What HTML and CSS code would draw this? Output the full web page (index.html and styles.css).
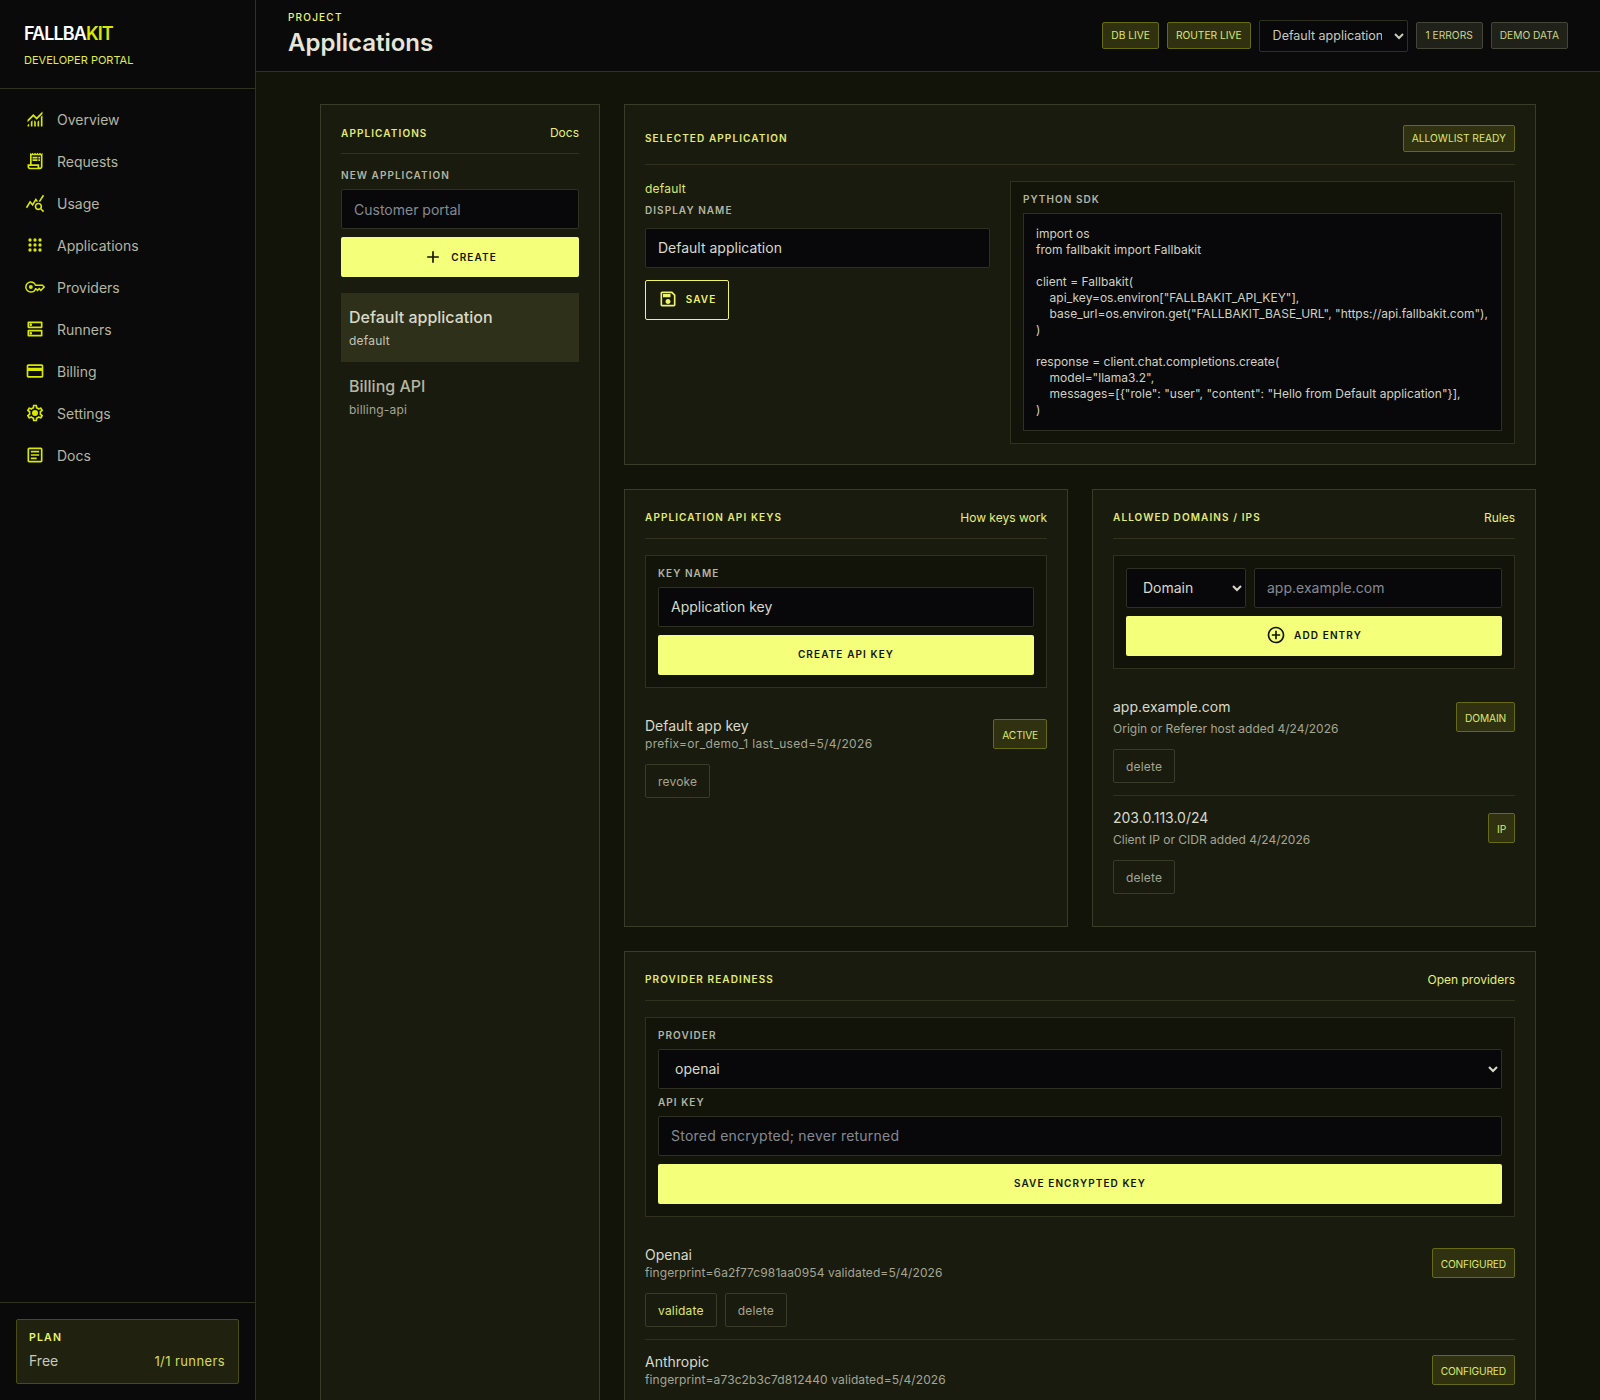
FILE: index.html
```html
<!DOCTYPE html>
<html lang="en">
<head>
  <meta charset="UTF-8" />
  <title>Fallbakit Developer Portal</title>
  <link rel="stylesheet" href="styles.css">
</head>
<body>
  <div class="shell">
    <!-- Sidebar -->
    <aside class="sidebar">
      <div class="brand">
        <div class="brand-name">FALLBA<span>KIT</span></div>
        <div class="brand-sub">DEVELOPER PORTAL</div>
      </div>
      <nav class="nav">
        <a class="nav-item"><svg viewBox="0 0 24 24"><path d="M3 21v-1.65l2-2V21Zm4 0v-5.65l2-2V21Zm4 0v-7.65l2 2V21Zm4 0v-5.65l2-2V21Zm4 0V9.35l2-2V21ZM3 15.85V13l7-7 4 4 7-7v2.85l-7 7-4-4Z"/></svg>Overview</a>
        <a class="nav-item"><svg viewBox="0 0 24 24"><path d="M19.5 3.5 18 2l-1.5 1.5L15 2l-1.5 1.5L12 2l-1.5 1.5L9 2 7.5 3.5 6 2v14H3v3c0 1.66 1.34 3 3 3h12c1.66 0 3-1.34 3-3V2l-1.5 1.5zM15 20H6c-.55 0-1-.45-1-1v-1h10v2zm4-1c0 .55-.45 1-1 1s-1-.45-1-1v-3H8V5h11v14z"/><path d="M9 7h6v2H9zM16 7h2v2h-2zM9 10h6v2H9zM16 10h2v2h-2z"/></svg>Requests</a>
        <a class="nav-item"><svg viewBox="0 0 24 24"><path d="M19.88 18.47c.44-.7.7-1.51.7-2.39 0-2.49-2.01-4.5-4.5-4.5s-4.5 2.01-4.5 4.5 2.01 4.5 4.49 4.5c.88 0 1.7-.26 2.39-.7L21.58 23 23 21.58l-3.12-3.11zm-3.8.11c-1.38 0-2.5-1.12-2.5-2.5s1.12-2.5 2.5-2.5 2.5 1.12 2.5 2.5-1.12 2.5-2.5 2.5zm-.36-8.5c-.74.02-1.45.18-2.1.45l-.55-.83-3.8 6.18-3.01-3.52-3.63 5.81L1 17l5-8 3 3.5L13 6l2.72 4.08zm2.59.5c-.64-.28-1.33-.45-2.05-.49L21.38 2 23 3.18l-4.69 7.4z"/></svg>Usage</a>
        <a class="nav-item"><svg viewBox="0 0 24 24"><circle cx="6" cy="6" r="2"/><circle cx="12" cy="6" r="2"/><circle cx="18" cy="6" r="2"/><circle cx="6" cy="12" r="2"/><circle cx="12" cy="12" r="2"/><circle cx="18" cy="12" r="2"/><circle cx="6" cy="18" r="2"/><circle cx="12" cy="18" r="2"/><circle cx="18" cy="18" r="2"/></svg>Applications</a>
        <a class="nav-item"><svg viewBox="0 0 24 24"><path class="outline" d="M21 10h-8.35C11.83 7.67 9.61 6 7 6c-3.31 0-6 2.69-6 6s2.69 6 6 6c2.61 0 4.83-1.67 5.65-4H13l2 2 2-2 2 2 4-4.04L21 10z"/><circle cx="7" cy="12" r="2.4"/></svg>Providers</a>
        <a class="nav-item"><svg viewBox="0 0 24 24"><path d="M19 15v4H5v-4h14m1-2H4c-.55 0-1 .45-1 1v6c0 .55.45 1 1 1h16c.55 0 1-.45 1-1v-6c0-.55-.45-1-1-1zM7 18.5c-.82 0-1.5-.67-1.5-1.5s.68-1.5 1.5-1.5 1.5.67 1.5 1.5-.67 1.5-1.5 1.5zM19 5v4H5V5h14m1-2H4c-.55 0-1 .45-1 1v6c0 .55.45 1 1 1h16c.55 0 1-.45 1-1V4c0-.55-.45-1-1-1zM7 8.5c-.82 0-1.5-.67-1.5-1.5S6.18 5.5 7 5.5s1.5.68 1.5 1.5S7.83 8.5 7 8.5z"/></svg>Runners</a>
        <a class="nav-item"><svg viewBox="0 0 24 24"><path d="M20 4H4c-1.11 0-1.99.89-1.99 2L2 18c0 1.11.89 2 2 2h16c1.11 0 2-.89 2-2V6c0-1.11-.89-2-2-2zm0 14H4v-6h16v6zm0-10H4V6h16v2z"/></svg>Billing</a>
        <a class="nav-item"><svg viewBox="0 0 24 24"><path d="M19.43 12.98c.04-.32.07-.64.07-.98 0-.34-.03-.66-.07-.98l2.11-1.65c.19-.15.24-.42.12-.64l-2-3.46c-.09-.16-.26-.25-.44-.25-.06 0-.12.01-.17.03l-2.49 1c-.52-.4-1.08-.73-1.69-.98l-.38-2.65C14.46 2.18 14.25 2 14 2h-4c-.25 0-.46.18-.49.42l-.38 2.65c-.61.25-1.17.59-1.69.98l-2.49-1c-.06-.02-.12-.03-.18-.03-.17 0-.34.09-.43.25l-2 3.46c-.13.22-.07.49.12.64l2.11 1.65c-.04.32-.07.65-.07.98 0 .33.03.66.07.98l-2.11 1.65c-.19.15-.24.42-.12.64l2 3.46c.09.16.26.25.44.25.06 0 .12-.01.17-.03l2.49-1c.52.4 1.08.73 1.69.98l.38 2.65c.03.24.24.42.49.42h4c.25 0 .46-.18.49-.42l.38-2.65c.61-.25 1.17-.59 1.69-.98l2.49 1c.06.02.12.03.18.03.17 0 .34-.09.43-.25l2-3.46c.12-.22.07-.49-.12-.64l-2.11-1.65zm-1.98-1.71c.04.31.05.52.05.73 0 .21-.02.43-.05.73l-.14 1.13.89.7 1.08.84-.7 1.21-1.27-.51-1.04-.42-.9.68c-.43.32-.84.56-1.25.73l-1.06.43-.16 1.13-.2 1.35h-1.4l-.19-1.35-.16-1.13-1.06-.43c-.43-.18-.83-.41-1.23-.71l-.91-.7-1.06.43-1.27.51-.7-1.21 1.08-.84.89-.7-.14-1.13c-.03-.31-.05-.54-.05-.74s.02-.43.05-.73l.14-1.13-.89-.7-1.08-.84.7-1.21 1.27.51 1.04.42.9-.68c.43-.32.84-.56 1.25-.73l1.06-.43.16-1.13.2-1.35h1.39l.19 1.35.16 1.13 1.06.43c.43.18.83.41 1.23.71l.91.7 1.06-.43 1.27-.51.7 1.21-1.07.85-.89.7.14 1.13z"/><circle cx="12" cy="12" r="3.6"/></svg>Settings</a>
        <a class="nav-item"><svg viewBox="0 0 24 24"><path d="M19 5v14H5V5h14m0-2H5c-1.1 0-2 .9-2 2v14c0 1.1.9 2 2 2h14c1.1 0 2-.9 2-2V5c0-1.1-.9-2-2-2z"/><path d="M14 17H7v-2h7v2zm3-4H7v-2h10v2zm0-4H7V7h10v2z"/></svg>Docs</a>
      </nav>
      <div class="plan-wrap">
        <div class="plan">
          <div class="plan-label">PLAN</div>
          <div class="plan-row"><span class="plan-name">Free</span><span class="plan-usage">1/1 runners</span></div>
        </div>
      </div>
    </aside>

    <div class="main">
      <!-- Top bar -->
      <header class="topbar">
        <div class="title-stack">
          <div class="eyebrow">PROJECT</div>
          <h1>Applications</h1>
        </div>
        <div class="top-actions">
          <span class="badge">DB LIVE</span>
          <span class="badge">ROUTER LIVE</span>
          <select class="app-select"><option>Default application</option></select>
          <span class="badge muted">1 ERRORS</span>
          <span class="badge muted">DEMO DATA</span>
        </div>
      </header>

      <main class="content">
        <!-- Application list -->
        <section class="panel list-panel">
          <div class="panel-head">
            <h2>APPLICATIONS</h2>
            <a class="link">Docs</a>
          </div>
          <div class="field-label">NEW APPLICATION</div>
          <input class="input" type="text" placeholder="Customer portal">
          <button class="btn primary gap-top"><svg viewBox="0 0 24 24"><path d="M19 13h-6v6h-2v-6H5v-2h6V5h2v6h6v2z"/></svg>CREATE</button>
          <div class="app-list">
            <div class="app-item selected">
              <div class="app-name">Default application</div>
              <div class="app-slug">default</div>
            </div>
            <div class="app-item">
              <div class="app-name">Billing API</div>
              <div class="app-slug">billing-api</div>
            </div>
          </div>
        </section>

        <div class="stack">
          <!-- Selected application -->
          <section class="panel">
            <div class="panel-head">
              <h2>SELECTED APPLICATION</h2>
              <span class="badge">ALLOWLIST READY</span>
            </div>
            <div class="selected-grid">
              <div class="selected-form">
                <div class="slug-line">default</div>
                <div class="field-label">DISPLAY NAME</div>
                <input class="input" type="text" value="Default application">
                <button class="btn outline-btn"><svg viewBox="0 0 24 24"><path d="M17 3H5c-1.11 0-2 .9-2 2v14c0 1.1.89 2 2 2h14c1.1 0 2-.9 2-2V7l-4-4zm2 16H5V5h11.17L19 7.83V19zm-7-7c-1.66 0-3 1.34-3 3s1.34 3 3 3 3-1.34 3-3-1.34-3-3-3zM6 6h9v4H6z"/></svg>SAVE</button>
              </div>
              <div class="box">
                <div class="field-label">PYTHON SDK</div>
<pre class="code">import os
from fallbakit import Fallbakit

client = Fallbakit(
    api_key=os.environ["FALLBAKIT_API_KEY"],
    base_url=os.environ.get("FALLBAKIT_BASE_URL", "https://api.fallbakit.com"),
)

response = client.chat.completions.create(
    model="llama3.2",
    messages=[{"role": "user", "content": "Hello from Default application"}],
)</pre>
              </div>
            </div>
          </section>

          <div class="two-col">
            <!-- API keys -->
            <section class="panel">
              <div class="panel-head">
                <h2>APPLICATION API KEYS</h2>
                <a class="link">How keys work</a>
              </div>
              <div class="box">
                <div class="field-label">KEY NAME</div>
                <input class="input" type="text" value="Application key">
                <button class="btn primary gap-top">CREATE API KEY</button>
              </div>
              <div class="rows">
                <div class="row">
                  <div class="row-head">
                    <div>
                      <div class="row-title">Default app key</div>
                      <div class="row-sub wide">prefix=or_demo_1 last_used=5/4/2026</div>
                    </div>
                    <span class="badge tall">ACTIVE</span>
                  </div>
                  <div class="row-actions"><button class="btn-small">revoke</button></div>
                </div>
              </div>
            </section>

            <!-- Allowlist -->
            <section class="panel">
              <div class="panel-head">
                <h2>ALLOWED DOMAINS / IPS</h2>
                <a class="link">Rules</a>
              </div>
              <div class="box">
                <div class="entry-grid">
                  <select class="input"><option>Domain</option></select>
                  <input class="input" type="text" placeholder="app.example.com">
                </div>
                <button class="btn primary gap-top"><svg viewBox="0 0 24 24"><path d="M13 7h-2v4H7v2h4v4h2v-4h4v-2h-4V7zm-1-5C6.48 2 2 6.48 2 12s4.48 10 10 10 10-4.48 10-10S17.52 2 12 2zm0 18c-4.41 0-8-3.59-8-8s3.59-8 8-8 8 3.59 8 8-3.59 8-8 8z"/></svg>ADD ENTRY</button>
              </div>
              <div class="rows">
                <div class="row">
                  <div class="row-head">
                    <div>
                      <div class="row-title">app.example.com</div>
                      <div class="row-sub roomy">Origin or Referer host added 4/24/2026</div>
                    </div>
                    <span class="badge tall">DOMAIN</span>
                  </div>
                  <div class="row-actions"><button class="btn-small">delete</button></div>
                </div>
                <div class="row">
                  <div class="row-head">
                    <div>
                      <div class="row-title">203.0.113.0/24</div>
                      <div class="row-sub roomy">Client IP or CIDR added 4/24/2026</div>
                    </div>
                    <span class="badge tall">IP</span>
                  </div>
                  <div class="row-actions"><button class="btn-small">delete</button></div>
                </div>
              </div>
            </section>
          </div>

          <!-- Providers -->
          <section class="panel">
            <div class="panel-head">
              <h2>PROVIDER READINESS</h2>
              <a class="link">Open providers</a>
            </div>
            <div class="box">
              <div class="field-label">PROVIDER</div>
              <select class="input"><option>openai</option></select>
              <div class="field-label gap-label">API KEY</div>
              <input class="input wide-ph" type="text" placeholder="Stored encrypted; never returned">
              <button class="btn primary gap-top">SAVE ENCRYPTED KEY</button>
            </div>
            <div class="rows">
              <div class="row">
                <div class="row-head">
                  <div>
                    <div class="row-title">Openai</div>
                    <div class="row-sub">fingerprint=6a2f77c981aa0954 validated=5/4/2026</div>
                  </div>
                  <span class="badge tall">CONFIGURED</span>
                </div>
                <div class="row-actions"><button class="btn-small accent">validate</button><button class="btn-small">delete</button></div>
              </div>
              <div class="row">
                <div class="row-head">
                  <div>
                    <div class="row-title">Anthropic</div>
                    <div class="row-sub">fingerprint=a73c2b3c7d812440 validated=5/4/2026</div>
                  </div>
                  <span class="badge tall">CONFIGURED</span>
                </div>
              </div>
            </div>
          </section>
        </div>
      </main>
    </div>
  </div>
</body>
</html>
```

FILE: styles.css
```css
/* Reset & Base */
* { margin: 0; padding: 0; box-sizing: border-box; }
html, body { width: 100%; height: 100%; overflow: hidden; background: #12140a; color: #e6e6d8; font-family: Inter, "Liberation Sans", sans-serif; font-size: 14px; }
svg { fill: currentColor; flex: none; }
h1, h2 { font-weight: 600; }

.shell { display: flex; height: 100vh; overflow: hidden; }

/* Sidebar */
.sidebar { width: 256px; flex: none; display: flex; flex-direction: column; background: #0a0a0a; border-right: 1px solid #30321f; }
.brand { height: 89px; padding: 24px 24px 0; border-bottom: 1px solid #30321f; }
.brand-name { font-size: 18px; line-height: 20px; font-weight: 600; letter-spacing: -0.9px; color: #fff; }
.brand-name span { color: #d9e800; }
.brand-sub { margin-top: 9px; font-size: 11px; line-height: 14px; color: #e0ec50; }
.nav { padding: 9px 16px; display: flex; flex-direction: column; }
.nav-item { height: 42px; padding: 0 8px 0 9px; display: flex; align-items: center; gap: 12px; color: #b4b5a2; font-size: 14px; }
.nav-item svg { width: 20px; height: 20px; color: #d9e800; }
.nav-item .outline { fill: none; stroke: currentColor; stroke-width: 1.8; }
.plan-wrap { margin-top: auto; height: 98px; padding: 16px; border-top: 1px solid #30321f; }
.plan { height: 65px; padding: 12px 13px 0 12px; background: #20220f; border: 1px solid #4a4c14; border-radius: 2px; }
.plan-label { font-size: 10.5px; line-height: 12px; font-weight: 600; letter-spacing: 1.2px; color: #eef46c; }
.plan-row { margin-top: 7px; display: flex; justify-content: space-between; align-items: center; line-height: 20px; }
.plan-name { color: #c9cabb; }
.plan-usage { font-size: 13px; letter-spacing: .4px; color: #d4dc5c; }

/* Top bar */
.main { flex: 1; min-width: 0; display: flex; flex-direction: column; }
.topbar { height: 72px; flex: none; padding: 0 32px; display: flex; align-items: center; justify-content: space-between; background: #0a0a0a; border-bottom: 1px solid #30321f; }
.title-stack { padding-bottom: 2px; }
.eyebrow { font-size: 10px; line-height: 12px; font-weight: 500; letter-spacing: 1.2px; color: #eef46c; }
.title-stack h1 { margin-top: 4px; font-size: 24px; line-height: 32px; font-weight: 600; color: #e6e6d8; }
.top-actions { display: flex; align-items: center; gap: 8px; }
.app-select { width: 149px; height: 32px; padding: 0 9px; color-scheme: dark; background: #08080b; color: #c9cabb; border: 1px solid #2e3024; border-radius: 2px; font: 12.5px Inter, sans-serif; }
.app-select + .badge { padding: 6px 9px; }

/* Badges */
.badge { display: inline-block; flex: none; padding: 6px 8px; font-size: 10.2px; line-height: 13px; white-space: nowrap; color: #dfe86a; background: #2f3111; border: 1px solid #666a10; border-radius: 2px; }
.badge.muted { background: #20221a; border-color: #44463a; color: #cfd48a; }
.badge.tall { padding: 7.5px 8px 6.5px; line-height: 14px; letter-spacing: -.15px; }

/* Layout */
.content { flex: 1; padding: 32px 64px; display: grid; grid-template-columns: 280px minmax(0, 1fr); gap: 24px; align-items: stretch; }
.stack { display: flex; flex-direction: column; gap: 24px; min-width: 0; }
.two-col { display: grid; grid-template-columns: 1fr 1fr; gap: 24px; }

/* Panels */
.panel { padding: 20px; background: #191b0f; border: 1px solid #3a3c2a; }
.panel-head { display: flex; justify-content: space-between; align-items: center; padding-bottom: 12px; margin-bottom: 16px; border-bottom: 1px solid #30321f; }
.panel-head h2 { padding-bottom: 1px; font-size: 10px; line-height: 15px; letter-spacing: 1.1px; color: #e4ec74; }
.list-panel .panel-head h2 { padding: 1px 0 0; }
.link { font-size: 12px; line-height: 16px; color: #e8f078; }
.box { padding: 12px; background: #12140a; border: 1px solid #30321f; }
.field-label { margin-bottom: 8px; font-size: 10px; line-height: 11px; font-weight: 600; letter-spacing: 1.05px; color: #b4b5a2; }
.gap-label { margin-top: 8px; }
.gap-top { margin-top: 8px; }

/* Form controls */
.input { display: block; width: 100%; height: 40px; padding: 0 12px 2px; color-scheme: dark; background: #08080b; color: #d8d9c8; border: 1px solid #2e3024; border-radius: 2px; font: 14px Inter, sans-serif; outline: none; }
.panel > .input { padding-bottom: 0; }
.input::placeholder { color: #868a90; opacity: 1; }
.wide-ph::placeholder { letter-spacing: .23px; }
.btn { display: flex; align-items: center; justify-content: center; gap: 8px; width: 100%; height: 40px; padding-bottom: 2px; border: none; border-radius: 2px; font: 600 10px Inter, sans-serif; letter-spacing: 1.1px; cursor: pointer; }
.panel > .btn { padding-bottom: 0; }
.btn svg { width: 20px; height: 20px; }
.btn.primary { background: #f4ff7a; color: #12140a; }
.outline-btn { width: 84px; margin-top: 12px; background: transparent; color: #eef46c; border: 1px solid #eef46c; }
.btn-small { height: 34px; padding: 0 12px; background: transparent; color: #a4a592; border: 1px solid #3a3c2a; border-radius: 2px; font: 12px Inter, sans-serif; letter-spacing: .2px; cursor: pointer; }
.btn-small.accent { color: #dfe86a; }

/* App list */
.app-list { margin-top: 16px; }
.app-item { height: 69px; padding: 14px 8px 0; }
.app-item.selected { background: #2f301a; }
.app-name { font-size: 16px; line-height: 20px; font-weight: 500; color: #b4b5a2; }
.app-item.selected .app-name { color: #d8d9c8; }
.app-slug { margin-top: 6px; font-size: 12px; line-height: 16px; letter-spacing: .2px; color: #a4a592; }
.app-item.selected .app-slug { color: #c4c5b4; }

/* Selected application */
.selected-grid { display: grid; grid-template-columns: 345px minmax(0, 1fr); gap: 20px; align-items: start; }
.slug-line { margin-bottom: 8px; font-size: 12px; line-height: 16px; letter-spacing: .2px; color: #dfe86a; }
.selected-form .field-label { margin-bottom: 12px; }
.code { padding: 12px; background: #08080b; border: 1px solid #2e3024; color: #d0d1c0; font: 12px/16px Inter, sans-serif; letter-spacing: .02px; white-space: pre; overflow: hidden; }

/* Rows */
.rows { margin-top: 16px; }
.row { padding: 12px 0; }
.row + .row { border-top: 1px solid #30321f; }
.row-head { display: flex; justify-content: space-between; align-items: center; gap: 12px; }
.row-title { line-height: 20px; color: #d8d9c8; }
.row-sub { font-size: 12px; line-height: 16px; letter-spacing: .1px; color: #a4a592; }
.row-sub.wide { letter-spacing: .32px; }
.row-sub.roomy { padding-top: 3px; line-height: 17px; letter-spacing: 0; }
.row-actions { margin-top: 12px; display: flex; gap: 8px; }
.entry-grid { display: grid; grid-template-columns: 120px 1fr; gap: 8px; }
```
